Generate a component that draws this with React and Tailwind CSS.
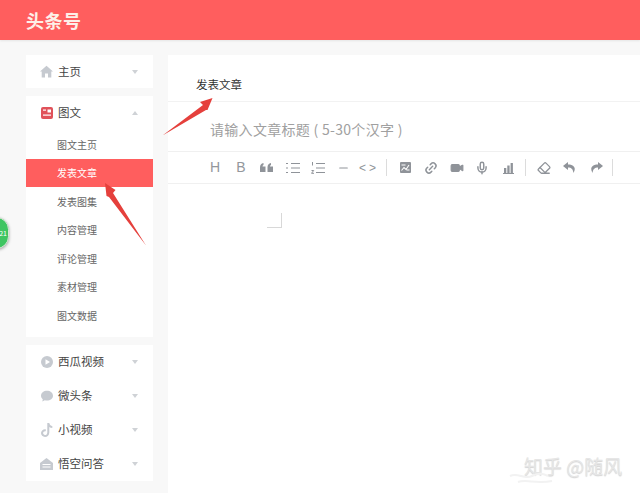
import { Minus, Link2, Video, Mic, Eraser } from "lucide-react";

const cjk = "font-['Noto_Sans_CJK_SC','Noto_Sans',sans-serif]";

const subItems = ["图文主页", "发表文章", "发表图集", "内容管理", "评论管理", "素材管理", "图文数据"];

function Caret({ up }) {
  return (
    <span className="flex w-[12px] justify-center">
      {up ? (
        <span className="border-x-[3.500px] border-b-[4px] border-x-transparent border-b-[#cfd2d6]" />
      ) : (
        <span className="border-x-[3.500px] border-t-[4px] border-x-transparent border-t-[#cfd2d6]" />
      )}
    </span>
  );
}

function HomeIcon() {
  return (
    <svg width="13" height="13" viewBox="0 0 13 13">
      <path d="M6.500 .8 13 6.600h-1.700V12.400H8V8.600H5v3.800H1.700V6.600H0z" fill="#c6cad0" />
    </svg>
  );
}

function ArticleIcon() {
  return (
    <svg width="12" height="12" viewBox="0 0 12 12">
      <rect width="12" height="12" rx="2" fill="#e0525a" />
      <rect x="6.500" y="2.500" width="3.500" height="3" fill="#fff" />
      <rect x="2" y="7.500" width="8" height="1.200" fill="#fff" />
      <rect x="2" y="2.500" width="3" height="1.200" fill="#fff" />
    </svg>
  );
}

function PlayIcon() {
  return (
    <svg width="12" height="12" viewBox="0 0 12 12">
      <circle cx="6" cy="6" r="6" fill="#c6cad0" />
      <path d="M4.500 3.300 9 6 4.500 8.700z" fill="#fff" />
    </svg>
  );
}

function BubbleIcon() {
  return (
    <svg width="12" height="12" viewBox="0 0 12 12">
      <path d="M6 .8c3.300 0 6 2.100 6 4.900s-2.700 4.900-6 4.900c-.8 0-1.500-.1-2.200-.3L1.300 11.500l.5-2.300C.7 8.300 0 7.100 0 5.700 0 2.900 2.700.8 6 .8z" fill="#c6cad0" />
    </svg>
  );
}

function TiktokIcon() {
  return (
    <svg width="12" height="14" viewBox="0 0 12 14">
      <path d="M6.300 0h2c.2 1.600 1.200 2.700 3 3v2c-1.200 0-2.200-.3-3-.9v5.300C8.300 12 6.500 14 4 14 1.700 14 0 12.200 0 10.100c0-2.500 2.200-4.300 4.800-3.900v2.100c-1.400-.4-2.700.5-2.700 1.800 0 1 .8 1.900 1.900 1.900 1.300 0 2.300-1 2.300-2.600z" fill="#c6cad0" />
    </svg>
  );
}

function QaIcon() {
  return (
    <svg width="13" height="12" viewBox="0 0 13 12">
      <path d="M6.500 0 13 5v7H0V5z" fill="#c6cad0" />
      <path d="M2.500 6.500h8M2.500 9h8" stroke="#fff" strokeWidth="1" />
    </svg>
  );
}

function MenuRow({ icon, label, up, className = "h-[34px]" }) {
  return (
    <div className={`flex items-center pl-[14px] pr-[12px] ${className}`}>
      <span className="flex w-[13px] justify-center">{icon}</span>
      <span className="ml-[5px] flex-1 text-[11.500px] text-[#444]">{label}</span>
      <Caret up={up} />
    </div>
  );
}

function ListIcon({ ordered }) {
  return (
    <svg width="14" height="12" viewBox="0 0 14 12" stroke="#8f9399" fill="none" strokeWidth="1.200">
      <path d="M5 1.500h9M5 6h9M5 10.500h9" />
      {ordered ? (
        <path d="M1.500 0v3.500M.5 8.500h2.200L.5 11.300h2.500" strokeWidth="1" />
      ) : (
        <path d="M0 1.500h2M0 6h2M0 10.500h2" />
      )}
    </svg>
  );
}

function ImageIcon() {
  return (
    <svg width="11" height="11" viewBox="0 0 11 11">
      <rect width="11" height="11" rx="1" fill="#8f9399" />
      <path d="M1.500 3h4M6.500 8h3M1.500 8.500 4 5.500l2 2 3-4.500" stroke="#fff" strokeWidth="1.100" fill="none" />
    </svg>
  );
}

function ChartIcon() {
  return (
    <svg width="11" height="12" viewBox="0 0 11 12" fill="#8f9399">
      <rect x="1" y="6" width="2.300" height="5" />
      <rect x="4.300" y="3.500" width="2.300" height="7.500" />
      <rect x="7.600" y="1" width="2.300" height="10" />
      <rect y="11" width="11" height="1" />
    </svg>
  );
}

function QuoteIcon() {
  return (
    <svg width="13" height="9" viewBox="0 0 13 9" fill="#8f9399">
      <path d="M0 9V4.500C0 2 1.200.5 3.500 0v2C2.800 2.300 2.500 2.800 2.500 3.500H5.500V9zM7.500 9V4.500C7.500 2 8.700.5 11 0v2c-.7.3-1 .8-1 1.500h3V9z" />
    </svg>
  );
}

// chunky filled arrows, the outline icons from the packages are too thin here
function UndoIcon({ flip }) {
  return (
    <svg width="13" height="11" viewBox="0 0 13 11" fill="#8f9399" className={flip ? "-scale-x-100" : ""}>
      <path d="M5 0 0 4l5 4V5.500c3 0 4.800 1.200 5.500 5.500C13.500 6 11 2.500 5 2.500z" />
    </svg>
  );
}

function ToolBtn({ children, className = "" }) {
  return <span className={`flex h-4 items-center justify-center ${className}`}>{children}</span>;
}

function Divider({ className = "" }) {
  return <span className={`h-[17px] w-px bg-[#dcdcdc] ${className}`} />;
}

function Toolbar() {
  const gray = "#8f9399";
  return (
    <div className="flex h-[33px] items-center border-y border-[#f0f0f0] pl-[41px]">
      <ToolBtn className="w-[12px] text-[14px] text-[#94979c] font-['Liberation_Sans',sans-serif]">H</ToolBtn>
      <ToolBtn className="ml-[14px] w-[12px] text-[14px] text-[#94979c] font-['Liberation_Sans',sans-serif]">B</ToolBtn>
      <ToolBtn className="ml-[13px] w-[13px]"><QuoteIcon /></ToolBtn>
      <ToolBtn className="ml-[13px] w-[14px]"><ListIcon /></ToolBtn>
      <ToolBtn className="ml-[11px] w-[14px]"><ListIcon ordered /></ToolBtn>
      <ToolBtn className="ml-[12px] w-[13px]"><Minus size={14} color={gray} /></ToolBtn>
      <ToolBtn className="ml-[11px] w-[16px] text-[12px] tracking-[3px] text-[#8f9399] font-['Liberation_Sans',sans-serif]">{"<>"}</ToolBtn>
      <Divider className="ml-[9px]" />
      <ToolBtn className="ml-[12px] w-[12px]"><ImageIcon /></ToolBtn>
      <ToolBtn className="ml-[13px] w-[14px]"><Link2 size={14} color={gray} strokeWidth={2.500} className="-rotate-45" /></ToolBtn>
      <ToolBtn className="ml-[12px] w-[14px]"><Video size={14} color={gray} fill={gray} /></ToolBtn>
      <ToolBtn className="ml-[11px] w-[14px]"><Mic size={14} color={gray} strokeWidth={2.500} /></ToolBtn>
      <ToolBtn className="ml-[13px] w-[12px]"><ChartIcon /></ToolBtn>
      <Divider className="ml-[11px]" />
      <ToolBtn className="ml-[11px] w-[14px]"><Eraser size={14} color={gray} strokeWidth={2.200} /></ToolBtn>
      <ToolBtn className="ml-[11px] w-[14px]"><UndoIcon /></ToolBtn>
      <ToolBtn className="ml-[13px] w-[14px]"><UndoIcon flip /></ToolBtn>
      <Divider className="ml-[9px]" />
    </div>
  );
}

export default function App() {
  return (
    <div className={`relative h-[493px] w-[640px] overflow-hidden bg-[#f8f8f8] ${cjk}`}>
      <header className="flex h-[40px] items-center bg-[#ff5e5e] pl-[26px] shadow-[0_1px_2px_rgba(0,0,0,0.08)]">
        <span className="text-[18px] font-bold tracking-[0.5px] text-[#fdf0e8]">头条号</span>
      </header>

      <div className="flex pl-[26px] pt-[15px]">
        {/* sidebar */}
        <aside className="flex w-[127px] flex-col gap-[8px]">
          <div className="bg-white">
            <MenuRow icon={<HomeIcon />} label="主页" className="h-[33px]" />
          </div>

          <div className="bg-white pb-[7.500px]">
            <MenuRow icon={<ArticleIcon />} label="图文" up />
            <div className="flex flex-col">
              {subItems.map((item) => (
                <div
                  key={item}
                  className={
                    item === "发表文章"
                      ? "flex h-[28.500px] items-center bg-[#ff5e5e] pl-[31px] text-[10px] text-[#fff]"
                      : "flex h-[28.500px] items-center pl-[31px] text-[10px] text-[#666]"
                  }
                >
                  {item}
                </div>
              ))}
            </div>
          </div>

          <div className="bg-white">
            <MenuRow icon={<PlayIcon />} label="西瓜视频" />
            <MenuRow icon={<BubbleIcon />} label="微头条" />
            <MenuRow icon={<TiktokIcon />} label="小视频" />
            <MenuRow icon={<QaIcon />} label="悟空问答" />
          </div>
        </aside>

        {/* editor */}
        <main className="ml-[15px] h-[438px] flex-1 bg-white">
          <div className="flex h-[47px] items-end border-b border-[#f2f2f2] pb-[8px] pl-[28px] text-[11.500px] text-[#333]">
            发表文章
          </div>
          <div className="flex h-[49px] items-center pl-[42px] pt-[6px] text-[14px] tracking-[0.3px] text-[#a0a0a0]">
            {"请输入文章标题 ( 5-30个汉字 )"}
          </div>
          <Toolbar />
          <div className="ml-[99px] mt-[29px] h-[15px] w-[15px] border-b border-r border-[#d8d8d8]" />
        </main>
      </div>

      {/* green floating badge, cut off by the left edge */}
      <div className="absolute left-[-16px] top-[217px] flex h-[32px] w-[25px] items-center justify-end rounded-full border border-[#d5e8d5] bg-[#3fc562] pr-[1px] text-[7px] text-white shadow-[0_1px_3px_rgba(0,0,0,0.35)]">
        21
      </div>

      {/* red annotation arrows */}
      <svg className="absolute left-0 top-0" width="640" height="493" viewBox="0 0 640 493">
        <path d="M212.500 98 200 102 203 105 162.500 135.500 206 110 207.500 110z" fill="#e5403c" />
        <path d="M105 183 115.500 190 113 193 146 245.500 109 197 106.500 196z" fill="#e5403c" />
      </svg>

      {/* watermark */}
      <div className="absolute left-[524px] top-[452px] text-[19px] text-[#e6e6e6] [text-shadow:0_1px_1px_rgba(0,0,0,0.18)]">
        知乎 @随风
      </div>
      <svg className="absolute left-[508px] top-[470px]" width="60" height="14" viewBox="0 0 60 14" fill="none" stroke="#f2f2f2" strokeWidth="2">
        <path d="M2 6c8-4 14 4 22 0s12-2 16 0" />
        <path d="M10 12c8-3 18 2 34-1" />
      </svg>
    </div>
  );
}
